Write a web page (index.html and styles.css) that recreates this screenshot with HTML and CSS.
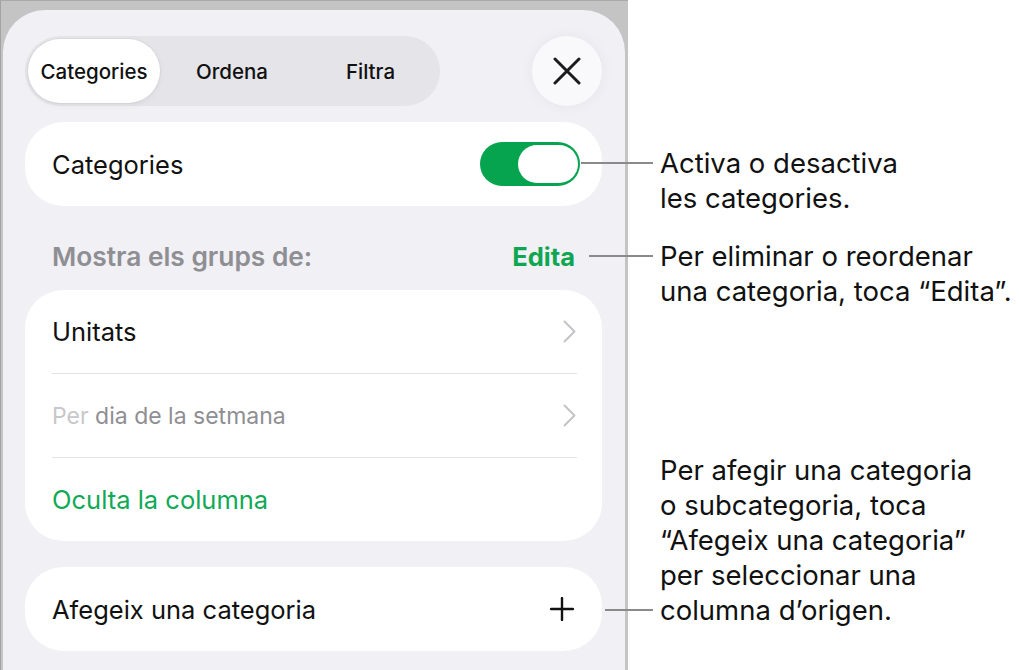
FILE: index.html
```html
<!DOCTYPE html>
<html lang="ca">
<head>
  <meta charset="UTF-8">
  <title>Categories</title>
  <link rel="stylesheet" href="styles.css">
</head>
<body>
  <div class="screen">
    <div class="device">
      <div class="sheet">
        <div class="sheet-top">
          <div class="segmented">
            <div class="seg-item active">Categories</div>
            <div class="seg-item seg-mid">Ordena</div>
            <div class="seg-item">Filtra</div>
          </div>
          <div class="close-btn">
            <svg width="28" height="28" viewBox="0 0 28 28">
              <path d="M2 2 L26 26 M26 2 L2 26" stroke="#1c1c1e" stroke-width="3" stroke-linecap="round" fill="none"/>
            </svg>
          </div>
        </div>

        <div class="card card-single">
          <span class="row-label">Categories</span>
          <div class="toggle"><div class="knob"></div></div>
        </div>

        <div class="section-head">
          <span class="section-title">Mostra els grups de:</span>
          <span class="section-action">Edita</span>
        </div>

        <div class="card">
          <div class="row">
            <span class="row-label">Unitats</span>
            <svg class="chevron" width="13" height="23" viewBox="0 0 13 23">
              <path d="M1.5 1.5 L11.5 11.5 L1.5 21.5" stroke="#c4c4c7" stroke-width="2" fill="none" stroke-linecap="round" stroke-linejoin="round"/>
            </svg>
          </div>
          <div class="divider"></div>
          <div class="row">
            <span class="row-label muted"><span class="faint">Per</span> dia de la setmana</span>
            <svg class="chevron" width="13" height="23" viewBox="0 0 13 23">
              <path d="M1.5 1.5 L11.5 11.5 L1.5 21.5" stroke="#c4c4c7" stroke-width="2" fill="none" stroke-linecap="round" stroke-linejoin="round"/>
            </svg>
          </div>
          <div class="divider"></div>
          <div class="row">
            <span class="row-label green">Oculta la columna</span>
          </div>
        </div>

        <div class="card card-single card-add">
          <span class="row-label">Afegeix una categoria</span>
          <svg width="24" height="24" viewBox="0 0 24 24">
            <path d="M12 1 V23 M1 12 H23" stroke="#111" stroke-width="2.4" stroke-linecap="round" fill="none"/>
          </svg>
        </div>
      </div>
    </div>

    <div class="callouts">
      <div class="callout">
        <div class="lead lead-toggle"></div>
        <p class="callout-text">Activa o desactiva<br>les categories.</p>
      </div>
      <div class="callout callout-edit">
        <div class="lead lead-edit"></div>
        <p class="callout-text">Per eliminar o reordenar<br>una categoria, toca “Edita”.</p>
      </div>
      <div class="callout callout-add">
        <div class="lead lead-add"></div>
        <p class="callout-text">Per afegir una categoria<br>o subcategoria, toca<br>“Afegeix una categoria”<br>per seleccionar una<br>columna d’origen.</p>
      </div>
    </div>
  </div>
</body>
</html>
```

FILE: styles.css
```css
body {
  margin: 0;
  background: #fff;
  font-family: Inter, "Noto Sans", sans-serif;
  color: #111;
  overflow: hidden;
}
.screen {
  display: flex;
  height: 670px;
}

/* device frame and sheet */
.device {
  width: 627px;
  flex-shrink: 0;
  background: #c4c4c4;
  border-top: 1px solid #a9a9a9;
  border-left: 1px solid #a3a3a3;
  display: flex;
}
.sheet {
  margin: 9px 3px 0 2px;
  flex: 1;
  background: #f0f0f5;
  border-radius: 42px 42px 0 0;
  padding: 26px 23px 0 22px;
}
.sheet-top {
  display: flex;
  justify-content: space-between;
  align-items: center;
}
.segmented {
  width: 409px;
  height: 64px;
  padding: 3px;
  border-radius: 35px;
  background: #e4e4e9;
  display: flex;
}
.seg-item {
  flex: 1;
  display: flex;
  align-items: center;
  justify-content: center;
  font-size: 20.5px;
  font-weight: 500;
  border-radius: 32px;
}
.seg-item.active {
  flex: 0 0 132px;
  background: #fff;
  box-shadow: 0 0 0 1px rgba(0, 0, 0, 0.04), 0 2px 6px rgba(0, 0, 0, 0.05);
}
.seg-mid {
  flex: 0 0 144px;
}
.close-btn {
  width: 70px;
  height: 70px;
  border-radius: 50%;
  background: #f9f9fb;
  box-shadow: 0 0 14px rgba(0, 0, 0, 0.05);
  display: flex;
  align-items: center;
  justify-content: center;
}

/* cards */
.card {
  background: #fff;
  border-radius: 38px;
}
.card-single {
  margin-top: 16px;
  height: 84px;
  padding: 0 22px 0 27px;
  display: flex;
  align-items: center;
  justify-content: space-between;
}
.card-add {
  margin-top: 26px;
  padding-right: 28px;
}
.row {
  height: 83px;
  padding: 0 26px 0 27px;
  display: flex;
  align-items: center;
  justify-content: space-between;
}
.divider {
  height: 1px;
  margin: 0 25px 0 27px;
  background: #e2e2e5;
}
.row-label {
  font-size: 25.5px;
}
.muted {
  font-size: 23px;
  color: #8e8e93;
}
.faint {
  color: #c7c7cc;
}
.green {
  color: #10a956;
}

.toggle {
  width: 100px;
  height: 44px;
  border-radius: 22px;
  background: #06a44f;
  padding: 3px 2px;
  box-sizing: border-box;
  display: flex;
  justify-content: flex-end;
}
.knob {
  width: 60px;
  height: 38px;
  border-radius: 19px;
  background: #fff;
}

.section-head {
  height: 28px;
  padding: 36px 27px 20px 27px;
  display: flex;
  align-items: center;
  justify-content: space-between;
}
.section-title {
  font-size: 26.3px;
  font-weight: 600;
  color: #8e8e93;
}
.section-action {
  font-size: 25.5px;
  font-weight: 700;
  color: #0fa651;
}

/* annotations */
.callouts {
  position: relative;
  padding-top: 146px;
}
.callout {
  display: flex;
  align-items: flex-start;
}
.callout-edit {
  margin-top: 23px;
}
.callout-add {
  margin-top: 144px;
  align-items: flex-end;
}
.lead {
  height: 2px;
  background: #8a8a8a;
  margin-top: 16px;
}
.lead-toggle {
  margin-left: -47px;
  width: 72px;
}
.lead-edit {
  margin-left: -39px;
  width: 64px;
}
.lead-add {
  margin-left: -23px;
  width: 48px;
  margin-bottom: 17px;
}
.callout-text {
  margin: 0 0 0 7px;
  font-size: 27.5px;
  line-height: 35px;
  color: #111;
  white-space: nowrap;
}
```
